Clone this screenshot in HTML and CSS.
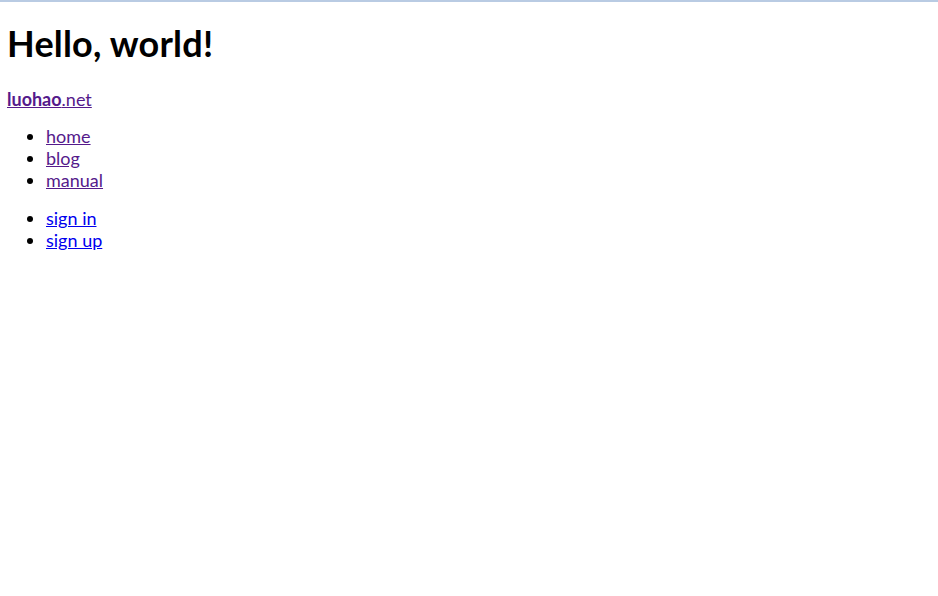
FILE: index.html
```html
<!DOCTYPE html>
<html lang="en">
<head>
  <meta charset="UTF-8">
  <title>Hello, world!</title>
  <link rel="stylesheet" href="styles.css">
</head>
<body>
  <h1>Hello, world!</h1>

  <p class="brand"><a class="visited" href="#"><b>luohao</b>.net</a></p>

  <ul class="nav">
    <li><a class="visited" href="#">home</a></li>
    <li><a class="visited" href="#">blog</a></li>
    <li><a class="visited" href="#">manual</a></li>
  </ul>

  <ul class="nav">
    <li><a href="#">sign in</a></li>
    <li><a href="#">sign up</a></li>
  </ul>
</body>
</html>
```

FILE: styles.css
```css
html {
  border-top: 2px solid #b9cbe3;
}

body {
  font-family: 'Lato', sans-serif;
  font-size: 18px;
  line-height: 22px;
  margin: 0 7px;
  color: #000;
}

h1 {
  font-size: 36px;
  line-height: 44px;
  letter-spacing: 0.2px;
  margin: 19px 0 23px;
}

a {
  color: #0000ee;
}

a.visited {
  color: #551a8b;
}

.brand {
  margin: 16px 0 15px;
}

.nav {
  margin: 15px 0 16px;
  padding-left: 39px;
}
```
